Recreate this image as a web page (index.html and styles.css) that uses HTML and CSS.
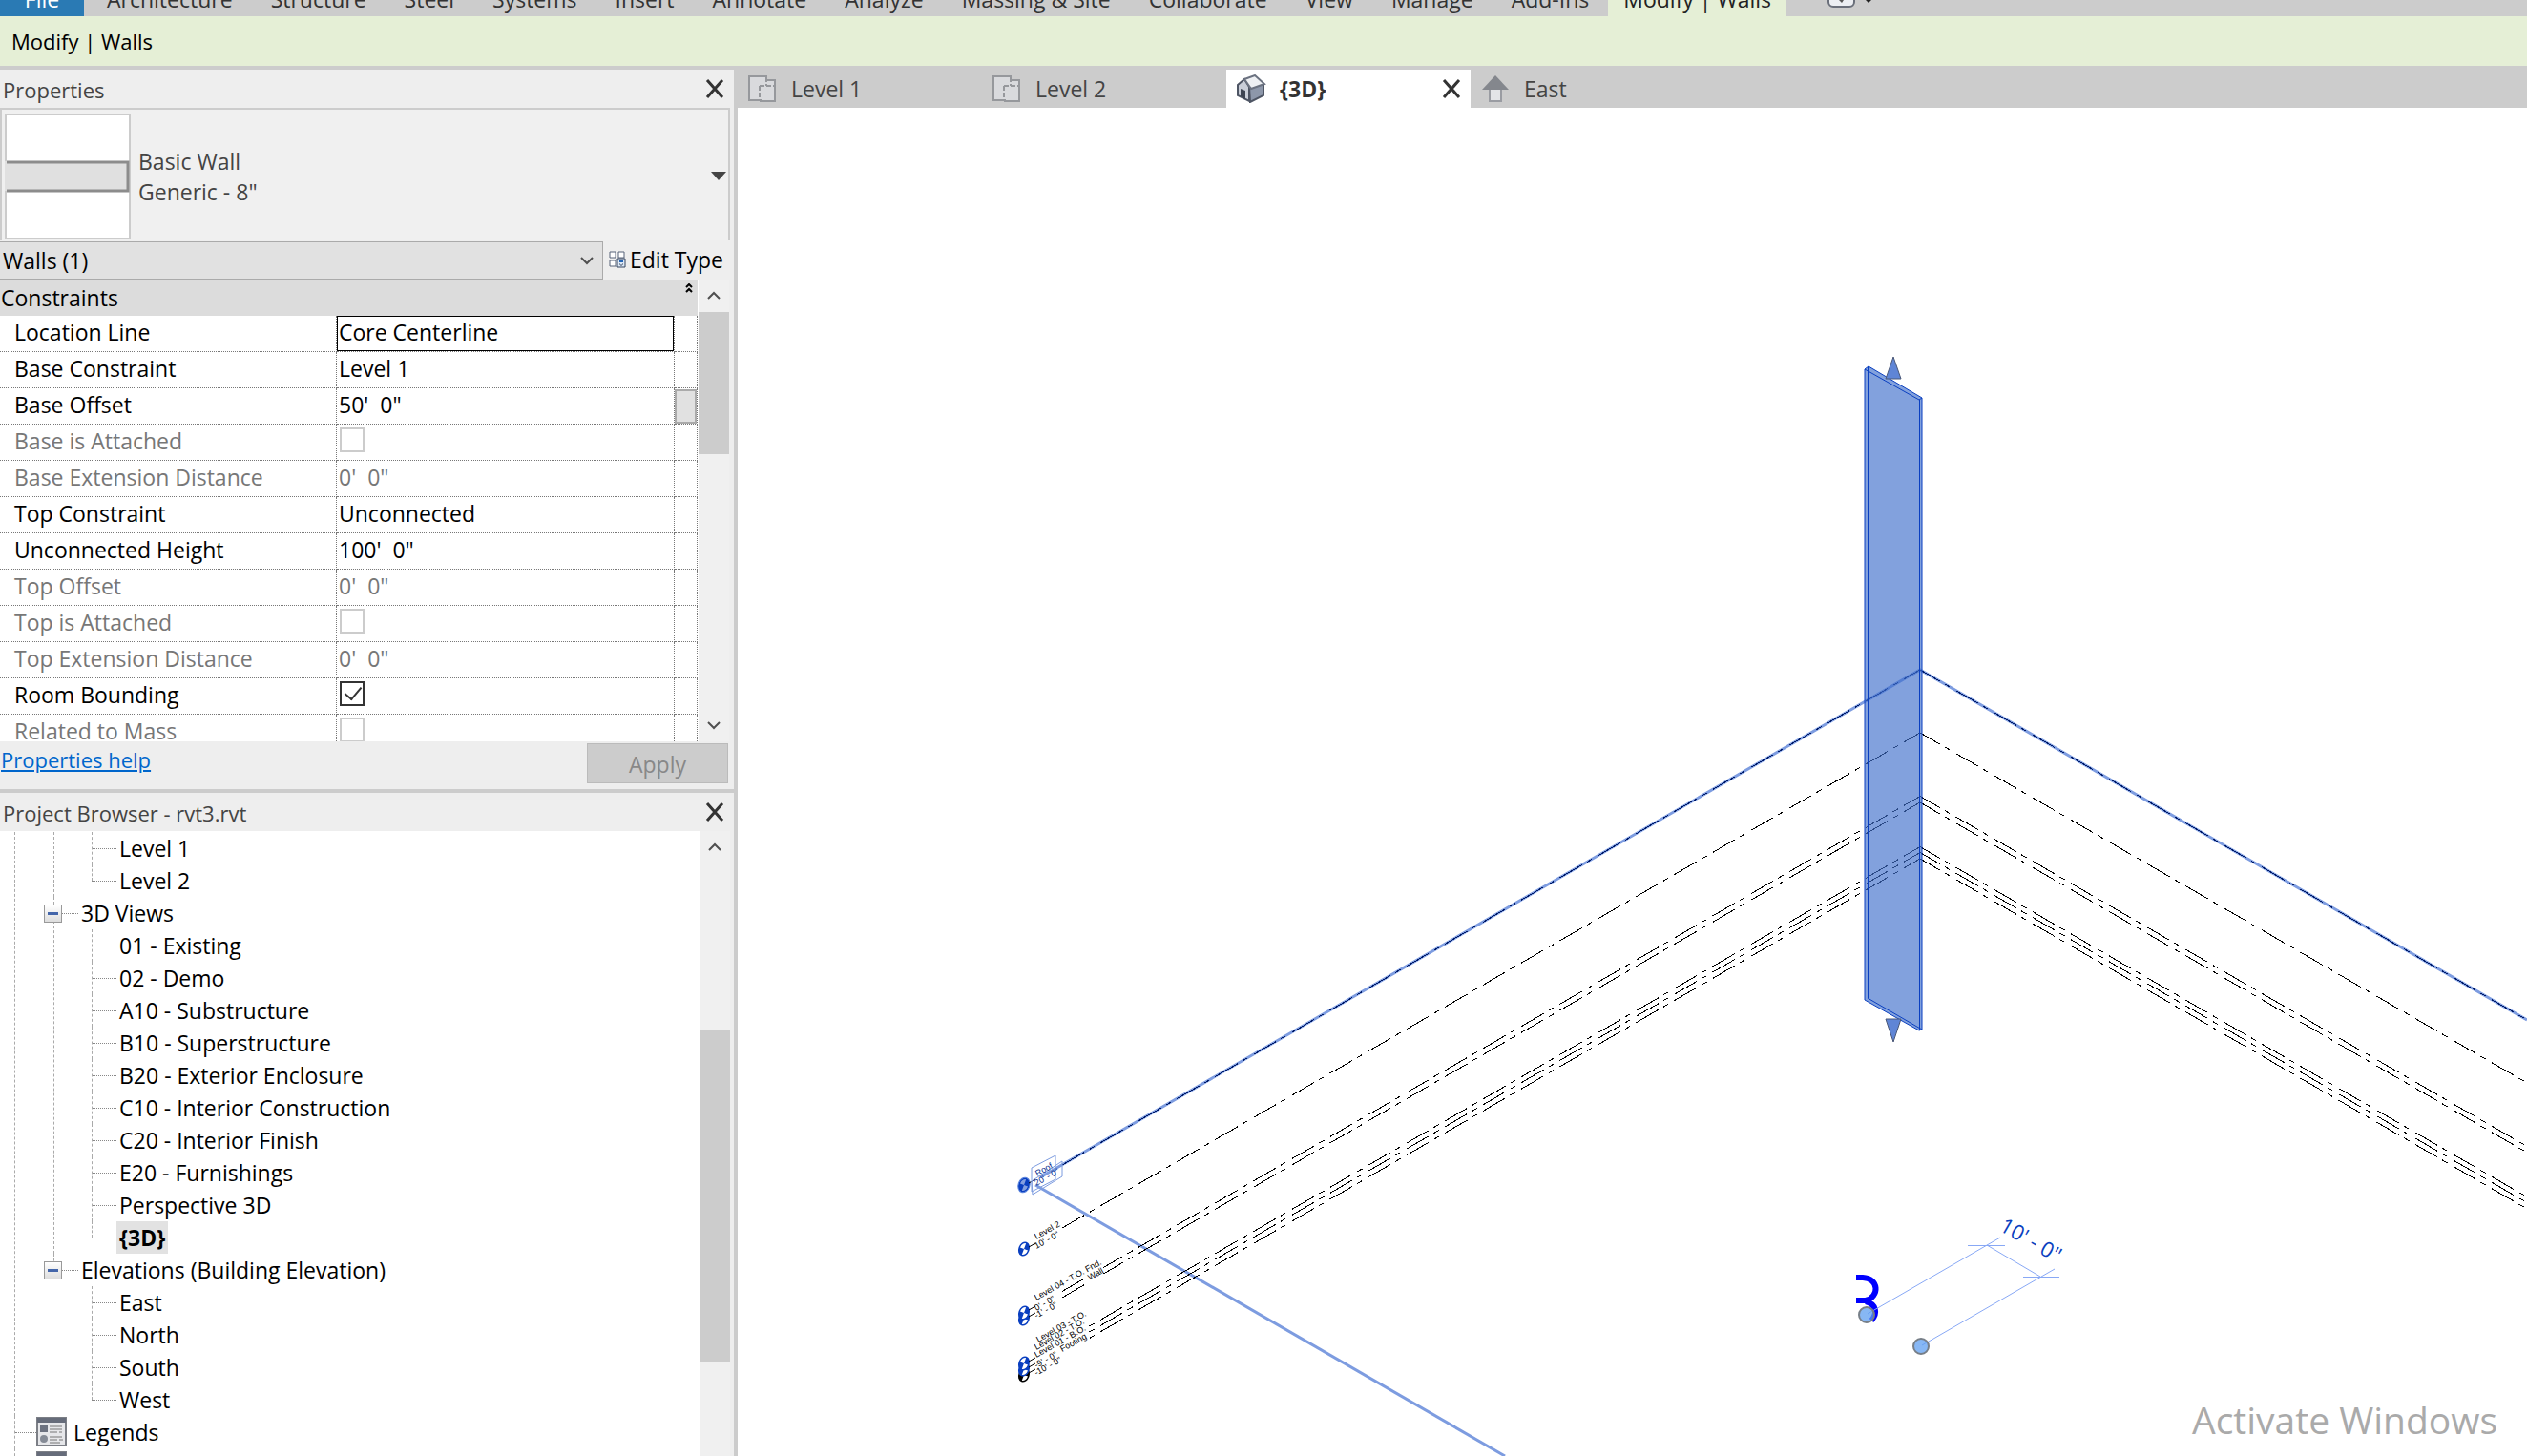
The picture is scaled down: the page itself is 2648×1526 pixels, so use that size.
FILE: index.html
```html
<!DOCTYPE html>
<html lang="en">
<head>
<meta charset="utf-8">
<title>rvt3.rvt - {3D}</title>
<link rel="stylesheet" href="styles.css">
</head>
<body>
<svg class="defs" aria-hidden="true">
  <symbol id="plan" viewBox="0 0 32 30">
    <path d="M2 2h18v4h9v22h-15v-1H2z" fill="#d9dadd" stroke="#96989c" stroke-width="2"/>
    <path d="M20 3v9M13 12h16M13 12v15" fill="none" stroke="#96989c" stroke-width="2" stroke-dasharray="5 2"/>
  </symbol>
  <symbol id="close" viewBox="0 0 20 20">
    <path d="M2 1L18 19M18 1L2 19" stroke="#333" stroke-width="3" fill="none"/>
  </symbol>
  <symbol id="up" viewBox="0 0 14 10"><path d="M1 8L7 2L13 8" fill="none" stroke="#505050" stroke-width="2"/></symbol>
  <symbol id="down" viewBox="0 0 14 10"><path d="M1 2L7 8L13 2" fill="none" stroke="#505050" stroke-width="2"/></symbol>
  <symbol id="sheet" viewBox="0 0 32 32">
    <path d="M1 1h30v29H1z" fill="#e6e7ea" stroke="#7c7f86" stroke-width="2"/>
    <path d="M1 1h30v5H1z" fill="#666c7a"/>
    <path d="M4 9h8v7H4z" fill="#6c7280"/><circle cx="8" cy="23" r="4" fill="#858b96"/>
    <path d="M14 10h13M14 13h13M14 16h8M24 16h3M14 21h13M14 24h8M24 24h4M14 27h11" stroke="#777" stroke-width="1"/>
  </symbol>
  <symbol id="head" viewBox="0 0 14 18">
    <g transform="rotate(20 7 9)"><ellipse cx="7" cy="9" rx="5" ry="7" fill="#fff" stroke="currentColor" stroke-width="1.500"/><path d="M7 9V2c3 0 5 3 5 7zM7 9v7c-3 0-5-3-5-7z" fill="currentColor"/></g>
  </symbol>
</svg>

<nav class="ribbon" aria-label="Ribbon">
  <button class="rtab file">File</button>
  <button class="rtab">Architecture</button>
  <button class="rtab">Structure</button>
  <button class="rtab">Steel</button>
  <button class="rtab">Systems</button>
  <button class="rtab">Insert</button>
  <button class="rtab">Annotate</button>
  <button class="rtab">Analyze</button>
  <button class="rtab">Massing &amp; Site</button>
  <button class="rtab">Collaborate</button>
  <button class="rtab">View</button>
  <button class="rtab">Manage</button>
  <button class="rtab">Add-Ins</button>
  <button class="rtab active">Modify | Walls</button>
  <button class="rmenu" aria-label="Ribbon display">
    <svg width="50" height="32" viewBox="0 0 50 32"><rect x="2" y="6" width="27" height="16" rx="5" fill="#eceef2" stroke="#6a6f7a" stroke-width="2"/><path d="M13 15h5l-2 3z" fill="#555"/><path d="M39 13h10l-5 5z" fill="#222"/></svg>
  </button>
</nav>
<div class="options">Modify | Walls</div>

<main class="work">
  <aside class="side">
    <section class="props">
      <header class="head"><h2>Properties</h2><button class="x" aria-label="Close properties"><svg width="20" height="20"><use href="#close"/></svg></button></header>
      <button class="type">
        <svg class="thumb" width="132" height="132" viewBox="0 0 132 132"><rect x="1" y="1" width="130" height="130" fill="#fff" stroke="#ccc" stroke-width="2"/><rect x="0" y="50" width="130" height="31" fill="#e0e0e0"/><path d="M2 51H129V81H2" fill="none" stroke="#8c8c8c" stroke-width="3"/></svg>
        <span class="tname">Basic Wall<br>Generic - 8"</span>
        <svg width="16" height="9"><path d="M0 0h16l-8 9z" fill="#444"/></svg>
      </button>
      <div class="filter">
        <div class="combo">
          <select aria-label="Element filter"><option>Walls (1)</option></select>
          <svg width="14" height="10"><use href="#down"/></svg>
        </div>
        <button class="edit"><svg width="18" height="18" viewBox="0 0 18 18"><path d="M1 1h6v6H1zM10 1h6v6h-6zM1 10h6v6H1z" fill="#fff" stroke="#566378"/><path d="M9 8h8v9H9z" fill="#dce8f6" stroke="#34455f"/><path d="M11 10h4v2h-4z" fill="#2364b5"/><path d="M11 14h1M14 14h1M12 15h2" stroke="#34455f"/></svg>Edit Type</button>
      </div>
      <div class="gridbox">
        <div class="gridscroll">
        <table class="grid">
          <colgroup><col class="c1"><col class="c2"><col class="c3"></colgroup>
          <thead><tr><th colspan="3"><span>Constraints</span><svg width="10" height="10" viewBox="0 0 10 10"><path d="M2 4l3-3 3 3M2 9l3-3 3 3" fill="none" stroke="#000" stroke-width="2"/></svg></th></tr></thead>
          <tbody>
            <tr><td><label for="p1">Location Line</label></td><td><input class="focus" id="p1" type="text" value="Core Centerline"></td><td></td></tr>
            <tr><td><label for="p2">Base Constraint</label></td><td><input id="p2" type="text" value="Level 1"></td><td></td></tr>
            <tr><td><label for="p3">Base Offset</label></td><td><input id="p3" type="text" value="50'  0&quot;"></td><td><button class="assoc" aria-label="Associate parameter"></button></td></tr>
            <tr class="off"><td><label for="p4">Base is Attached</label></td><td><input id="p4" type="checkbox" disabled></td><td></td></tr>
            <tr class="off"><td><label for="p5">Base Extension Distance</label></td><td><input id="p5" type="text" value="0'  0&quot;" disabled></td><td></td></tr>
            <tr><td><label for="p6">Top Constraint</label></td><td><input id="p6" type="text" value="Unconnected"></td><td></td></tr>
            <tr><td><label for="p7">Unconnected Height</label></td><td><input id="p7" type="text" value="100'  0&quot;"></td><td></td></tr>
            <tr class="off"><td><label for="p8">Top Offset</label></td><td><input id="p8" type="text" value="0'  0&quot;" disabled></td><td></td></tr>
            <tr class="off"><td><label for="p9">Top is Attached</label></td><td><input id="p9" type="checkbox" disabled></td><td></td></tr>
            <tr class="off"><td><label for="p10">Top Extension Distance</label></td><td><input id="p10" type="text" value="0'  0&quot;" disabled></td><td></td></tr>
            <tr><td><label for="p11">Room Bounding</label></td><td><input id="p11" type="checkbox" checked></td><td></td></tr>
            <tr class="off"><td><label for="p12">Related to Mass</label></td><td><input id="p12" type="checkbox" disabled></td><td></td></tr>
          </tbody>
        </table>
        </div>
        <div class="bar">
          <button aria-label="Scroll up"><svg width="14" height="10"><use href="#up"/></svg></button>
          <div class="track"><div class="thumbbar short"></div></div>
          <button aria-label="Scroll down"><svg width="14" height="10"><use href="#down"/></svg></button>
        </div>
      </div>
      <footer class="foot"><a href="#help">Properties help</a><button class="apply" disabled>Apply</button></footer>
    </section>

    <section class="browser">
      <header class="head"><h2>Project Browser - rvt3.rvt</h2><button class="x" aria-label="Close project browser"><svg width="20" height="20"><use href="#close"/></svg></button></header>
      <div class="treebox">
        <ul class="tree">
          <li>
            <ul class="groups">
              <li><ul class="items"><li><span>Level 1</span></li><li><span>Level 2</span></li></ul></li>
              <li>
                <div class="ghead"><button class="tog" aria-label="Collapse 3D Views"></button><span>3D Views</span></div>
                <ul class="items">
                  <li><span>01 - Existing</span></li><li><span>02 - Demo</span></li><li><span>A10 - Substructure</span></li><li><span>B10 - Superstructure</span></li><li><span>B20 - Exterior Enclosure</span></li><li><span>C10 - Interior Construction</span></li><li><span>C20 - Interior Finish</span></li><li><span>E20 - Furnishings</span></li><li><span>Perspective 3D</span></li><li><span class="cur">{3D}</span></li>
                </ul>
              </li>
              <li>
                <div class="ghead"><button class="tog" aria-label="Collapse Elevations"></button><span>Elevations (Building Elevation)</span></div>
                <ul class="items"><li><span>East</span></li><li><span>North</span></li><li><span>South</span></li><li><span>West</span></li></ul>
              </li>
            </ul>
          </li>
          <li class="leaf"><svg width="32" height="32"><use href="#sheet"/></svg><span>Legends</span></li>
          <li class="leaf late"><svg width="32" height="32"><use href="#sheet"/></svg></li>
        </ul>
        <div class="bar">
          <button aria-label="Scroll up"><svg width="14" height="10"><use href="#up"/></svg></button>
          <div class="track"><div class="thumbbar long"></div></div>
        </div>
      </div>
    </section>
  </aside>

  <section class="view">
    <nav class="vtabs" aria-label="Open views">
      <button class="vtab"><svg width="32" height="30"><use href="#plan"/></svg>Level 1</button>
      <button class="vtab"><svg width="32" height="30"><use href="#plan"/></svg>Level 2</button>
      <div class="vtab on">
        <button class="vname"><svg width="32" height="30" viewBox="0 0 32 30"><path d="M2 11L9 5L14 13V28L2 22z" fill="#c9ced8" stroke="#4e5564" stroke-width="2"/><path d="M14 13L29 10V22L15 29z" fill="#8d97aa" stroke="#4e5564" stroke-width="2"/><path d="M9 5L20 1L30 10L16 15z" fill="#eef0f3" stroke="#6b7280" stroke-width="2"/><path d="M5 15l5 2v9l-5-3z" fill="#3d4452"/></svg>{3D}</button>
        <button class="x" aria-label="Close view"><svg width="20" height="20"><use href="#close"/></svg></button>
      </div>
      <button class="vtab"><svg width="32" height="30" viewBox="0 0 32 30"><path d="M10 15h12v13H10z" fill="#e3e4e7" stroke="#9a9ca2" stroke-width="2"/><path d="M16 1L30 16H2z" fill="#84878d"/></svg>East</button>
    </nav>
    <svg class="canvas" viewBox="773 113 1875 1413" preserveAspectRatio="xMinYMin slice" role="img" aria-label="3D model view">
      <!-- selected roof level plane -->
      <g fill="none" stroke="#7d9ce0" stroke-width="3">
        <path d="M1090 1234L2012 702L2648 1069"/>
        <path d="M1085 1242L1577 1526"/>
      </g>
      <!-- level lines, left and right of the corner -->
      <g fill="none" stroke="#000" stroke-width="1" stroke-dasharray="27 6 6 7.3" shape-rendering="crispEdges">
        <path d="M1113 1221L2012 702" stroke="#001a66"/>
        <path d="M1113 1287L2012 768"/>
        <path d="M1113 1353.5L2012 834.5"/>
        <path d="M1113 1360L2012 841"/>
        <path d="M1113 1406.5L2012 887.5"/>
        <path d="M1113 1412.5L2012 893.5"/>
        <path d="M1113 1419L2012 900"/>
        <g stroke-dashoffset="3">
          <path d="M2012 702L2648 1069" stroke="#001a66"/>
          <path d="M2012 768L2648 1135"/>
          <path d="M2012 834.5L2648 1201.5"/>
          <path d="M2012 841L2648 1208"/>
          <path d="M2012 887.5L2648 1254.5"/>
          <path d="M2012 893.5L2648 1260.5"/>
          <path d="M2012 900L2648 1267"/>
        </g>
      </g>
      <!-- blank out level lines behind the head labels -->
      <path d="M1136 1338L1156 1324V1340L1136 1352zM1085 1412L1140 1374V1404L1085 1444z" fill="#fff"/>
      <!-- level heads -->
      <g color="#0a3fc0">
        <use href="#head" x="1066" y="1233" width="14" height="18"/>
        <ellipse cx="1073" cy="1242" rx="6" ry="8" fill="#0a3fc0" fill-opacity=".5" stroke="#5d86de" transform="rotate(20 1073 1242)"/>
        <use href="#head" x="1066" y="1300" width="14" height="18"/>
        <use href="#head" x="1066" y="1373" width="14" height="18"/>
        <use href="#head" x="1066" y="1367" width="14" height="18"/>
        <use href="#head" x="1066" y="1432" width="14" height="18" color="#000"/>
        <use href="#head" x="1066" y="1426" width="14" height="18"/>
        <use href="#head" x="1066" y="1420" width="14" height="18"/>
      </g>
      <path d="M1078 1240l7-4M1078 1307l7-4M1078 1373l7-4M1078 1380l7-4M1078 1427l7-4M1078 1433l7-4M1078 1439l7-4" stroke="#000"/>
      <g fill="none" stroke="#7d9ce0" stroke-width="1"><path d="M1081 1224L1106 1211V1236L1081 1249z"/><path d="M1081 1238L1113 1217V1233L1082 1252z"/></g>
      <g class="lbl">
        <text class="sel" transform="translate(1087 1233) rotate(-29)">Roof</text>
        <text class="sel" transform="translate(1086 1243) rotate(-29)">20' - 0"</text>
        <text transform="translate(1086 1299) rotate(-29)">Level 2</text>
        <text transform="translate(1086 1309) rotate(-29)">10' - 0"</text>
        <text transform="translate(1086 1363) rotate(-29)">Level 04 - T.O. Fnd.</text>
        <text transform="translate(1142 1342) rotate(-29)">Wall</text>
        <text transform="translate(1086 1374) rotate(-29)">0' - 0"</text>
        <text transform="translate(1086 1382) rotate(-29)">-1' - 0"</text>
        <text transform="translate(1088 1407) rotate(-29)">Level 03 - T.O.</text>
        <text transform="translate(1086 1415) rotate(-29)">Level 02 - T.O.</text>
        <text transform="translate(1086 1423) rotate(-29)">Level 01 - B.O.</text>
        <text transform="translate(1113 1417) rotate(-29)">Footing</text>
        <text transform="translate(1086 1434) rotate(-29)">-9' - 0"</text>
        <text transform="translate(1086 1442) rotate(-29)">-10' - 0"</text>
      </g>
      <!-- selected wall -->
      <path d="M1954 387L1958 384L2014 417V1079L2011 1080L1954 1048z" fill="#3f6ecb" fill-opacity=".65" stroke="#0a3fc0"/>
      <path d="M1957.500 384V1046M1954 387L2011 419L2014 417M2011.500 419V1080M1957 1046L2014 1079" fill="none" stroke="#0a3fc0"/>
      <g fill="#5f85d6" stroke="#4a5878" stroke-width="1"><path d="M1984 374L1992 397H1976z"/><path d="M1976 1068H1992L1984 1092z"/></g>
      <!-- rotated grid marker and temporary dimension -->
      <path d="M1945 1339h7c17 1 18 20 3 24h-10M1955 1364c11 3 13 12 6 20" fill="none" stroke="#00f" stroke-width="6"/>
      <path d="M1957 1377L2096 1297M2014 1410L2153 1330M2062 1305.500H2101M2120 1338.500H2158M2082 1305L2138 1338" fill="none" stroke="#88a8f5"/>
      <g fill="#5f9ff0" fill-opacity=".75" stroke="#777f88" stroke-width="2"><circle cx="1956" cy="1378" r="8"/><circle cx="2013" cy="1411" r="8"/></g>
      <text class="dim" transform="translate(2094 1289) rotate(30)">10' - 0"</text>
      <text class="wm1" x="2297" y="1503">Activate Windows</text>
      <text class="wm2" x="2302" y="1545">Go to Settings to activate Windows.</text>
    </svg>
  </section>
</main>
</body>
</html>
```
FILE: styles.css
```css
* { box-sizing: border-box; }
body {
  margin: 0;
  height: 100vh;
  display: flex;
  flex-direction: column;
  overflow: hidden;
  background: #ccc;
  color: #000;
  font: 23px/32px "Open Sans", "Noto Sans", sans-serif;
}
button, input, select { font: inherit; color: inherit; border: 0; border-radius: 0; padding: 0; margin: 0; background: none; }
ul { list-style: none; margin: 0; padding: 0; }
svg { display: block; flex: none; }
.defs { display: none; }

.ribbon { flex: none; height: 17px; display: flex; align-items: flex-end; overflow: hidden; color: #333; }
.rtab { height: 34px; padding: 0 20px 2px; white-space: nowrap; flex: none; }
.file { width: 88px; background: #2a7ab4; color: #fff; margin-right: 4px; }
.active { background: #e5efd6; padding: 0 16px 2px; color: #222; }
.rmenu { margin-left: 42px; height: 32px; }
.options { flex: none; height: 52px; padding: 10px 12px; background: #e5efd6; font-size: 22px; }

.work { flex: 1; min-height: 0; display: grid; grid-template-columns: 773px 1fr; padding-top: 4px; }
.side { min-height: 0; display: flex; flex-direction: column; gap: 4px; padding-right: 4px; }
.props, .browser { background: #eee; }
.head { display: flex; height: 40px; padding: 0 10px 0 3px; align-items: center; justify-content: space-between; color: #444; font-size: 22px; }
h2 { margin: 0; font: inherit; padding-top: 2px; }

.type { width: 765px; height: 139px; display: flex; align-items: center; gap: 8px; padding: 2px 2px 0 3px; border: 2px solid #ccc; border-bottom: 0; background: #f0f0f0; color: #444; text-align: left; }
.tname { flex: 1; }
.filter { display: flex; height: 41px; align-items: center; gap: 6px; }
.combo { position: relative; width: 632px; height: 40px; }
.combo select { appearance: none; width: 100%; height: 40px; padding: 0 3px; background: #e1e1e1; border: 1px solid #aaa; border-left: 0; }
.combo svg { position: absolute; right: 10px; top: 15px; pointer-events: none; }
.edit { display: flex; align-items: center; gap: 4px; padding-bottom: 2px; white-space: nowrap; }

.gridbox { display: flex; height: 484px; background: #eee; }
.gridscroll { width: 732px; overflow: hidden; background: #fff; }
.grid { width: 731px; table-layout: fixed; border-collapse: separate; border-spacing: 0; }
.c1 { width: 353px; }
.c2 { width: 354px; }
.c3 { width: 24px; }
.grid th { position: relative; height: 38px; padding: 0 0 0 1px; background: #dcdcdc; text-align: left; font-weight: 400; }
.grid th svg { position: absolute; right: 4px; top: 4px; }
.grid td { height: 38px; padding: 0; border-right: 1px dotted #777; border-bottom: 1px dotted #777; vertical-align: middle; }
.grid td:first-child { padding: 0 0 3px 15px; }
.grid input { display: block; }
.grid input[type="text"] { width: 353px; height: 37px; padding: 0 2px 3px; }
.grid input.focus { border: 1px solid #000; padding: 0 1px 3px; }
.grid input[type="checkbox"] { appearance: none; width: 26px; height: 26px; margin: 2px 3px 8px; border: 2px solid #ccc; background: #fff; }
.grid input:checked { border-color: #333; position: relative; }
.grid input:checked::after { content: ""; position: absolute; left: 7px; top: 0; width: 8px; height: 15px; border: solid #333; border-width: 0 2px 2px 0; transform: rotate(40deg); }
.off, .off input { color: #777; }
.assoc { display: block; width: 23px; height: 36px; background: #e1e1e1; border: 2px solid #aaa; }

.bar { width: 32px; background: #f0f0f0; display: flex; flex-direction: column; }
.bar button { height: 34px; display: grid; place-items: center; flex: none; }
.track { flex: 1; }
.thumbbar { background: #ccc; }
.short { height: 149px; }
.long { height: 348px; margin-top: 174px; }
.foot { display: flex; justify-content: space-between; height: 50px; padding: 2px 6px 0 1px; }
.foot a { color: #06c; height: 34px; padding-top: 1px; font-size: 22px; }
.apply { width: 148px; height: 42px; background: #ccc; border: 1px solid #bbb; color: #888; padding-top: 2px; }

.browser { flex: 1; min-height: 0; display: flex; flex-direction: column; }
.browser .head { flex: none; }
.treebox { flex: 1; min-height: 0; display: flex; overflow: hidden; background: #eee; }
.tree { width: 733px; padding: 1px 0 0 15px; background: #fff; overflow: hidden; }
.tree > li { border-left: 1px dashed #aaa; }
.groups { padding-left: 40px; }
.groups > li, .items > li { position: relative; }
.groups > li:not(:last-child)::before, .groups > li:last-child::before, .items > li::before {
  content: ""; position: absolute; left: 0; top: 0; bottom: 0; border-left: 1px dashed #aaa;
}
.groups > li:last-child::before, .items > li:last-child::before { bottom: auto; height: 17px; }
.items { padding-left: 40px; }
.items > li { height: 34px; display: flex; align-items: center; }
.items > li::after { content: ""; order: -1; width: 26px; border-top: 1px dotted #888; }
.items span { padding: 1px 3px; }
.items .cur { background: #e2e2e2; font-weight: 700; }
.ghead { position: relative; display: flex; height: 34px; align-items: center; margin-left: -10px; }
.ghead span { padding-left: 3px; }
.ghead::before { content: ""; width: 17px; border-top: 1px dotted #888; }
.tog { order: -1; width: 19px; height: 19px; border: 1px solid #999; background: linear-gradient(#46a, #46a) center / 11px 3px no-repeat, linear-gradient(#fff, #ddd); }
.leaf { display: flex; height: 34px; align-items: center; gap: 7px; }
.leaf::before { content: ""; width: 22px; border-top: 1px dotted #888; margin-right: -7px; }
.late { padding-top: 4px; }

.view { min-width: 0; min-height: 0; display: flex; flex-direction: column; }
.vtabs { flex: none; display: flex; height: 40px; color: #444; }
.vtab { width: 256px; display: flex; align-items: center; gap: 14px; padding: 0 10px; text-align: left; }
.vname { display: flex; align-items: center; gap: 14px; font-weight: 700; flex: 1; }
.on { background: #fff; color: #333; }
.canvas { flex: 1; min-height: 0; width: 100%; background: #fff; }
.lbl { font: 9px "Liberation Sans", sans-serif; fill: #000; }
.sel { fill: #0a2f90; }
.dim { font: 22px "Open Sans", sans-serif; fill: #0a3fc0; }
.wm1 { font: 39px "Open Sans", sans-serif; fill: #aaa; }
.wm2 { font: 26px "Open Sans", sans-serif; fill: #aaa; }
```
